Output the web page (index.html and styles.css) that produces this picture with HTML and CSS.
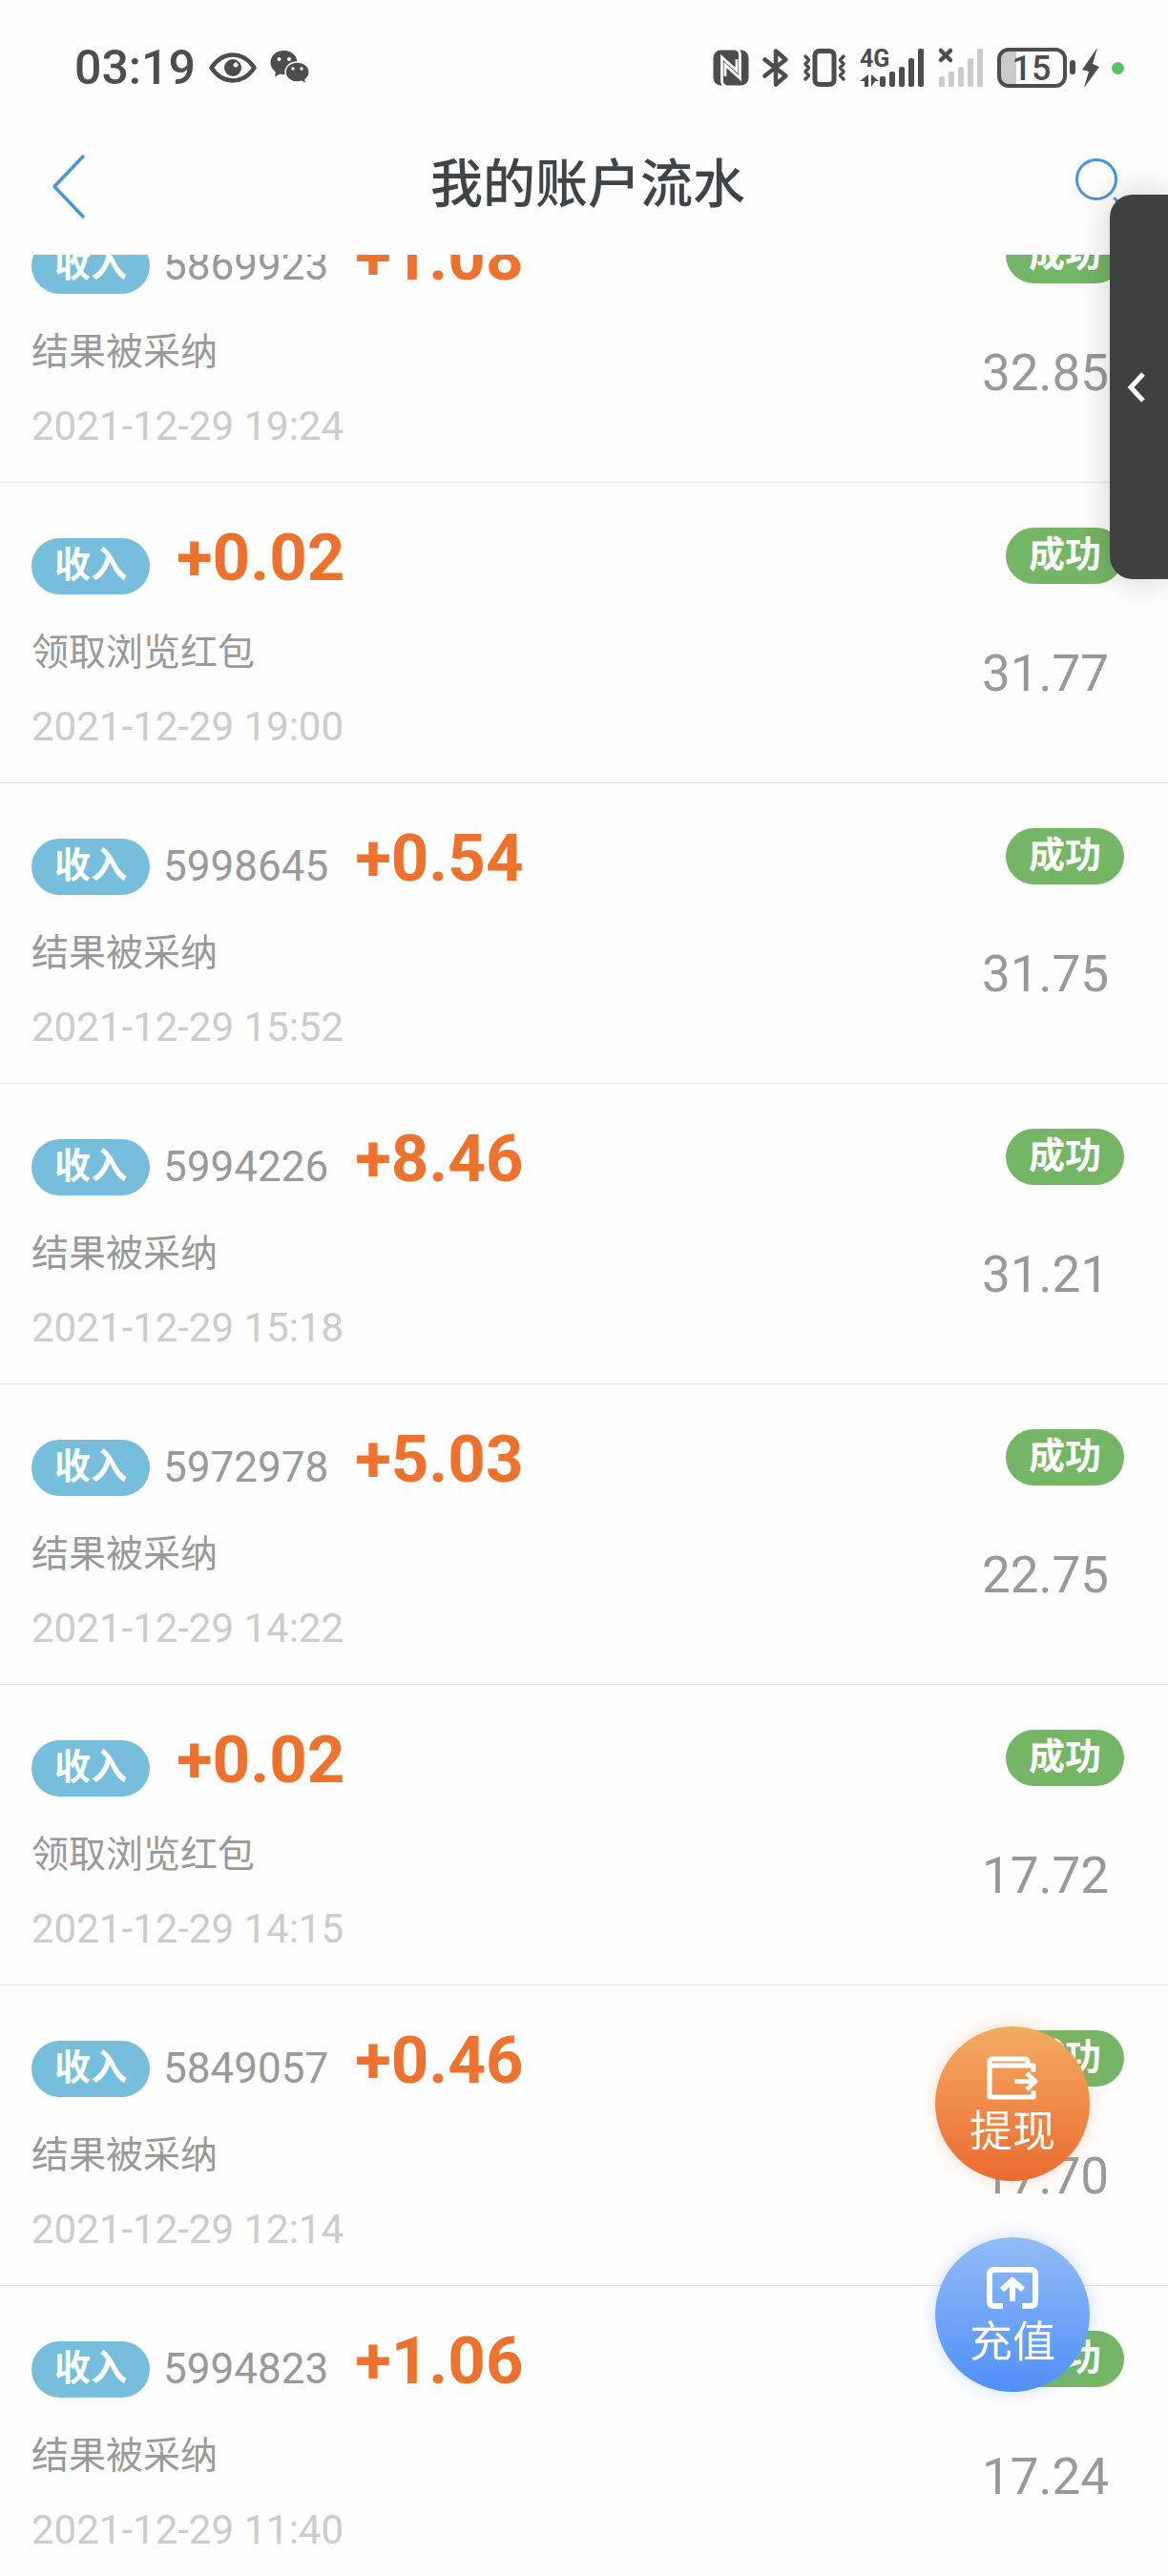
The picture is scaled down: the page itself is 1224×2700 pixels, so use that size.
FILE: index.html
```html
<!DOCTYPE html>
<html lang="zh-CN">
<head>
    <meta charset="UTF-8">
    <meta name="viewport" content="width=device-width, initial-scale=1.0">
    <title>我的账户流水</title>
    <link rel="stylesheet" href="styles.css">
</head>
<body>
    <div class="screen">
        <div class="status-bar">
            <div class="status-left">
                <span class="clock">03:19</span>
                <svg width="50" height="42" viewBox="0 0 50 42">
                    <path d="M2.500 21C9 11.500 17 7.500 25 7.500S41 11.500 47.500 21C41 30.500 33 34.500 25 34.500S9 30.500 2.500 21z" fill="none" stroke="#4d4d4d" stroke-width="4.500" stroke-linejoin="round"/>
                    <circle cx="25" cy="21" r="9" fill="#4d4d4d"/>
                    <circle cx="28" cy="18" r="2.500" fill="#fff"/>
                </svg>
                <svg width="42" height="42" viewBox="0 0 42 42">
                    <path d="M14.500 3C6.500 3 0.500 8.500 0.500 15.500c0 4 2 7.500 5.300 9.800L5 30.500l5.500-3c1.300.4 2.600.5 4 .5 8 0 14-5.500 14-12.500S22.500 3 14.500 3z" fill="#4d4d4d"/>
                    <path d="M28.500 15C21.500 15 16 19.600 16 25.500S21.500 36 28.500 36c1.500 0 3-.2 4.500-.7l5 2.700-1-4.500c2.600-2 4.200-4.800 4.200-8C41.200 19.600 35.500 15 28.500 15z" fill="#4d4d4d" stroke="#fff" stroke-width="1.500"/>
                    <g fill="#fff">
                        <circle cx="9.500" cy="12" r="2"/><circle cx="20" cy="12" r="2"/>
                        <circle cx="24" cy="22" r="1.700"/><circle cx="33" cy="22" r="1.700"/>
                    </g>
                </svg>
            </div>
            <div class="status-right">
                <svg width="38" height="42" viewBox="0 0 38 42">
                    <rect x="0.500" y="2.500" width="37" height="37" rx="8" fill="#4d4d4d"/>
                    <path d="M14 40.500q-4.500-1-4.500-6V10l15.500 14V12M24 1.500q4.500 1 4.500 6V32L13 18v12" fill="none" stroke="#fff" stroke-width="2.800"/>
                </svg>
                <svg width="28" height="42" viewBox="0 0 28 42">
                    <path d="M2.500 12.500l22 17L14 38.500v-35l10.500 9-22 17" fill="none" stroke="#4d4d4d" stroke-width="4.500" stroke-linejoin="round" stroke-linecap="round"/>
                </svg>
                <svg width="46" height="42" viewBox="0 0 46 42" fill="none" stroke="#4d4d4d">
                    <rect x="13" y="3.500" width="20" height="35" rx="4.500" stroke-width="5"/>
                    <path d="M3 9l3.500 4L3 17l3.500 4L3 25l3.500 4L3 33M43 9l-3.500 4 3.500 4-3.500 4 3.500 4-3.500 4 3.500 4" stroke-width="3.500" stroke-linecap="round" stroke-linejoin="round"/>
                </svg>
                <svg width="68" height="42" viewBox="0 0 68 42" fill="#4d4d4d">
                    <text x="0" y="20" class="net-label">4G</text>
                    <path d="M9 28v13H5v-6H0zM12 28l8 7h-4l-4 6z"/>
                    <rect x="21" y="30" width="6" height="11" rx="2"/>
                    <rect x="31" y="25" width="6" height="16" rx="2"/>
                    <rect x="41" y="20" width="6" height="21" rx="2"/>
                    <rect x="51" y="11" width="6" height="30" rx="2"/>
                    <rect x="61" y="1" width="6" height="40" rx="2"/>
                </svg>
                <svg width="48" height="42" viewBox="0 0 48 42" fill="#cbcbcb">
                    <path d="M3 3l10 10M13 3L3 13" stroke="#4d4d4d" stroke-width="4.500" stroke-linecap="round"/>
                    <rect x="1" y="30" width="6" height="11" rx="2"/>
                    <rect x="11" y="25" width="6" height="16" rx="2"/>
                    <rect x="21" y="20" width="6" height="21" rx="2"/>
                    <rect x="31" y="11" width="6" height="30" rx="2"/>
                    <rect x="41" y="1" width="6" height="40" rx="2"/>
                </svg>
                <svg width="106" height="42" viewBox="0 0 106 42">
                    <path d="M10 3h10v36H10a8 8 0 0 1-8-8V11a8 8 0 0 1 8-8z" fill="#cbcbcb"/>
                    <rect x="2" y="2" width="69" height="38" rx="10" fill="none" stroke="#4d4d4d" stroke-width="4"/>
                    <rect x="76" y="13" width="6" height="15" rx="3" fill="#4d4d4d"/>
                    <text x="36" y="34" text-anchor="middle" class="battery-label">15</text>
                    <path d="M105 0L89 23l7 2-5 17 16-22-7-3z" fill="#4d4d4d"/>
                </svg>
                <span class="dot"></span>
            </div>
        </div>

        <header class="nav-bar">
            <button class="nav-btn" type="button" aria-label="返回">
                <svg width="38" height="72" viewBox="0 0 38 72">
                    <path d="M35 7L5 38.500l30 31.500" fill="none" stroke="#4a94dd" stroke-width="3.500" stroke-linecap="round" stroke-linejoin="round"/>
                </svg>
            </button>
            <h1>我的账户流水</h1>
            <button class="nav-btn" type="button" aria-label="搜索">
                <svg width="54" height="54" viewBox="0 0 54 54">
                    <path d="M42 42l9 9" stroke="#4a94dd" stroke-width="3" stroke-linecap="round"/>
                    <circle cx="23" cy="22" r="20.500" fill="none" stroke="#4a94dd" stroke-width="3"/>
                </svg>
            </button>
        </header>

        <main class="content">
            <ul class="flow-list">
                <li class="flow-item">
                    <div class="info">
                        <div class="line"><span class="tag income">收入</span><span class="order">5869923</span><span class="amount">+1.08</span></div>
                        <p class="desc">结果被采纳</p>
                        <time class="date">2021-12-29 19:24</time>
                    </div>
                    <div class="result"><span class="tag success">成功</span><span class="balance">32.85</span></div>
                </li>
                <li class="flow-item">
                    <div class="info">
                        <div class="line"><span class="tag income">收入</span><span class="amount">+0.02</span></div>
                        <p class="desc">领取浏览红包</p>
                        <time class="date">2021-12-29 19:00</time>
                    </div>
                    <div class="result"><span class="tag success">成功</span><span class="balance">31.77</span></div>
                </li>
                <li class="flow-item">
                    <div class="info">
                        <div class="line"><span class="tag income">收入</span><span class="order">5998645</span><span class="amount">+0.54</span></div>
                        <p class="desc">结果被采纳</p>
                        <time class="date">2021-12-29 15:52</time>
                    </div>
                    <div class="result"><span class="tag success">成功</span><span class="balance">31.75</span></div>
                </li>
                <li class="flow-item">
                    <div class="info">
                        <div class="line"><span class="tag income">收入</span><span class="order">5994226</span><span class="amount">+8.46</span></div>
                        <p class="desc">结果被采纳</p>
                        <time class="date">2021-12-29 15:18</time>
                    </div>
                    <div class="result"><span class="tag success">成功</span><span class="balance">31.21</span></div>
                </li>
                <li class="flow-item">
                    <div class="info">
                        <div class="line"><span class="tag income">收入</span><span class="order">5972978</span><span class="amount">+5.03</span></div>
                        <p class="desc">结果被采纳</p>
                        <time class="date">2021-12-29 14:22</time>
                    </div>
                    <div class="result"><span class="tag success">成功</span><span class="balance">22.75</span></div>
                </li>
                <li class="flow-item">
                    <div class="info">
                        <div class="line"><span class="tag income">收入</span><span class="amount">+0.02</span></div>
                        <p class="desc">领取浏览红包</p>
                        <time class="date">2021-12-29 14:15</time>
                    </div>
                    <div class="result"><span class="tag success">成功</span><span class="balance">17.72</span></div>
                </li>
                <li class="flow-item">
                    <div class="info">
                        <div class="line"><span class="tag income">收入</span><span class="order">5849057</span><span class="amount">+0.46</span></div>
                        <p class="desc">结果被采纳</p>
                        <time class="date">2021-12-29 12:14</time>
                    </div>
                    <div class="result"><span class="tag success">成功</span><span class="balance">17.70</span></div>
                </li>
                <li class="flow-item">
                    <div class="info">
                        <div class="line"><span class="tag income">收入</span><span class="order">5994823</span><span class="amount">+1.06</span></div>
                        <p class="desc">结果被采纳</p>
                        <time class="date">2021-12-29 11:40</time>
                    </div>
                    <div class="result"><span class="tag success">成功</span><span class="balance">17.24</span></div>
                </li>
            </ul>
        </main>
    </div>

    <!-- edge drawer handle -->
    <button class="drawer" type="button" aria-label="展开">
        <svg width="20" height="34" viewBox="0 0 20 34">
            <path d="M17 3L4 17l13 14" fill="none" stroke="#fff" stroke-width="5"/>
        </svg>
    </button>

    <div class="float-actions">
        <button class="fab withdraw" type="button">
            <svg width="54" height="46" viewBox="0 0 54 46" fill="none" stroke="#fff" stroke-width="5" stroke-linejoin="round">
                <path d="M49 17V10H3M43 9V6q0-3-3-3H6Q3 3 3 6v37h46v-7"/>
                <path d="M29 26.500h21M42 18l9 8.500-9 8.500"/>
            </svg>
            <span>提现</span>
        </button>
        <button class="fab recharge" type="button">
            <svg width="54" height="46" viewBox="0 0 54 46" fill="none" stroke="#fff" stroke-width="6" stroke-linejoin="round">
                <path d="M17 41h-9q-5 0-5-5V8q0-5 5-5h38q5 0 5 5v28q0 5-5 5h-9"/>
                <path d="M27 36V14M16 24l11-10 11 10"/>
            </svg>
            <span>充值</span>
        </button>
    </div>
</body>
</html>
```
FILE: styles.css
```css
* {
    box-sizing: border-box;
}
body {
    margin: 0;
    font-family: Roboto, "Noto Sans CJK SC", sans-serif;
    background: #fefefe;
    color: #999;
}
button {
    padding: 0;
    border: none;
    background: none;
    font-family: inherit;
}
svg {
    display: block;
    overflow: visible;
}
.screen {
    display: flex;
    flex-direction: column;
    height: 100vh;
    overflow: hidden;
}

/* status bar */
.status-bar {
    display: flex;
    justify-content: space-between;
    align-items: center;
    height: 118px;
    padding: 24px 46px 0 78px;
    flex-shrink: 0;
}
.status-left,
.status-right {
    display: flex;
    align-items: center;
    gap: 14px;
}
.clock {
    font-size: 50px;
    font-weight: 500;
    line-height: 56px;
    color: #4d4d4d;
}
.net-label {
    font-size: 25px;
    font-weight: 700;
}
.battery-label {
    font-size: 36px;
    font-weight: 500;
    fill: #4d4d4d;
}
.dot {
    width: 13px;
    height: 13px;
    border-radius: 50%;
    background: #5cc163;
}

/* title bar */
.nav-bar {
    display: flex;
    justify-content: space-between;
    align-items: center;
    height: 149px;
    padding: 0 44px 0 52px;
    flex-shrink: 0;
}
.nav-bar h1 {
    margin: 0;
    font-size: 55px;
    font-weight: 500;
    line-height: 80px;
    color: #3f4449;
}
.nav-btn {
    display: flex;
    align-items: center;
    width: 54px;
    height: 72px;
}

/* records, scrolled part-way through the first one */
.content {
    flex: 1;
    overflow: hidden;
}
.flow-list {
    margin: -76px 0 0;
    padding: 0;
    list-style: none;
}
.flow-item {
    display: flex;
    justify-content: space-between;
    padding: 39px 46px 31px 33px;
    border-bottom: 1px solid #e4e4e4;
}
.line {
    display: flex;
    align-items: baseline;
    height: 80px;
}
.tag {
    height: 59px;
    padding: 0 24px;
    border-radius: 30px;
    font-size: 38px;
    font-weight: 700;
    line-height: 57px;
    color: #fff;
}
.income {
    align-self: flex-end;
    margin-bottom: 2px;
    background: #77bddc;
}
.success {
    background: #75b566;
}
.order {
    margin-left: 14px;
    font-size: 44px;
    line-height: 60px;
}
.amount {
    margin-left: 28px;
    font-size: 69px;
    font-weight: 700;
    line-height: 80px;
    color: #ed722e;
}
.desc {
    margin: 31px 0 22px;
    font-size: 39px;
    line-height: 56px;
}
.date {
    display: block;
    margin-bottom: -1px;
    font-size: 42px;
    line-height: 56px;
    color: #ccc;
}
.result {
    display: flex;
    flex-direction: column;
    align-items: flex-end;
    padding-top: 8px;
}
.balance {
    margin: 62px 16px 0 0;
    font-size: 53px;
    line-height: 64px;
}

/* floating parts */
.drawer {
    position: fixed;
    top: 204px;
    right: 0;
    display: flex;
    align-items: center;
    width: 61px;
    height: 403px;
    padding-left: 18px;
    border-radius: 24px 0 0 24px;
    background: #404040;
    box-shadow: 0 0 36px rgba(0,0,0,0.2);
}
.float-actions {
    position: fixed;
    right: 82px;
    bottom: 193px;
    display: flex;
    flex-direction: column;
    gap: 59px;
}
.fab {
    display: flex;
    flex-direction: column;
    align-items: center;
    width: 162px;
    height: 162px;
    padding-top: 31px;
    border-radius: 50%;
    font-size: 45px;
    line-height: 68px;
    color: #fff;
}
.withdraw {
    background: linear-gradient(#f2ab62, #ec6b30);
    box-shadow: 0 0 20px rgba(240,140,70,0.3);
}
.recharge {
    background: linear-gradient(#93bcf6, #4f90f8);
    box-shadow: 0 0 20px rgba(90,150,250,0.3);
}
```
